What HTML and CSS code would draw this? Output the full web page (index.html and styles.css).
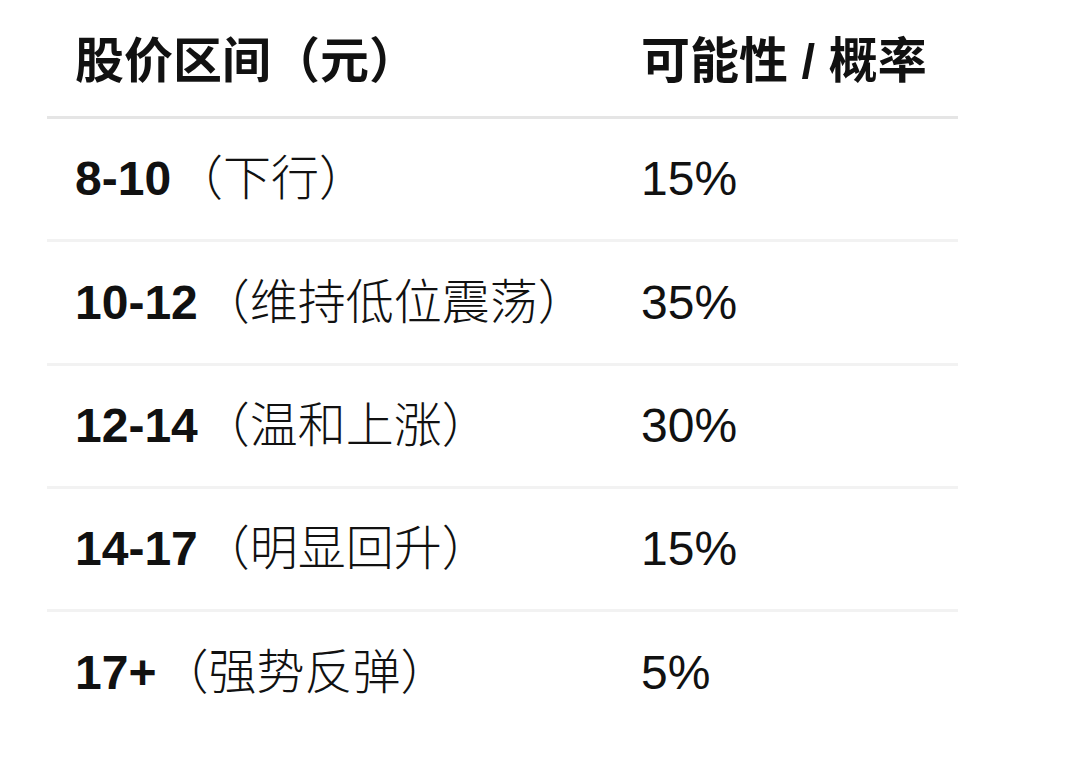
FILE: index.html
```html
<!DOCTYPE html>
<html lang="zh-CN">
<head>
<meta charset="utf-8">
<link rel="stylesheet" href="styles.css">
</head>
<body>
<div class="table">
  <div class="row head">
    <div class="cell">股价区间（元）</div>
    <div class="cell">可能性 / 概率</div>
  </div>
  <div class="row">
    <div class="cell"><b>8-10</b>（下行）</div>
    <div class="cell">15%</div>
  </div>
  <div class="row">
    <div class="cell"><b>10-12</b>（维持低位震荡）</div>
    <div class="cell">35%</div>
  </div>
  <div class="row">
    <div class="cell"><b>12-14</b>（温和上涨）</div>
    <div class="cell">30%</div>
  </div>
  <div class="row">
    <div class="cell"><b>14-17</b>（明显回升）</div>
    <div class="cell">15%</div>
  </div>
  <div class="row last">
    <div class="cell"><b>17+</b>（强势反弹）</div>
    <div class="cell">5%</div>
  </div>
</div>
</body>
</html>
```
FILE: styles.css
```css
html, body {
  margin: 0;
  padding: 0;
  background: #ffffff;
}
body {
  font-family: "Liberation Sans", "Noto Sans CJK SC", sans-serif;
  color: #111111;
}
.table {
  width: 911px;
  margin-left: 47px;
}
.row {
  display: grid;
  grid-template-columns: 566px 345px;
  align-items: center;
  height: 120.3px;
  border-bottom: 3px solid #f2f2f2;
  font-size: 48px;
  font-weight: 300;
  line-height: 1.2;
}
.row.head {
  height: 110px;
  padding-top: 6px;
  border-bottom-color: #e5e5e5;
  font-size: 49px;
  font-weight: bold;
}
.row.last {
  border-bottom: none;
}
.cell {
  padding-left: 28px;
  white-space: nowrap;
}
.cell b {
  font-weight: bold;
  margin-right: 4px;
}
```
